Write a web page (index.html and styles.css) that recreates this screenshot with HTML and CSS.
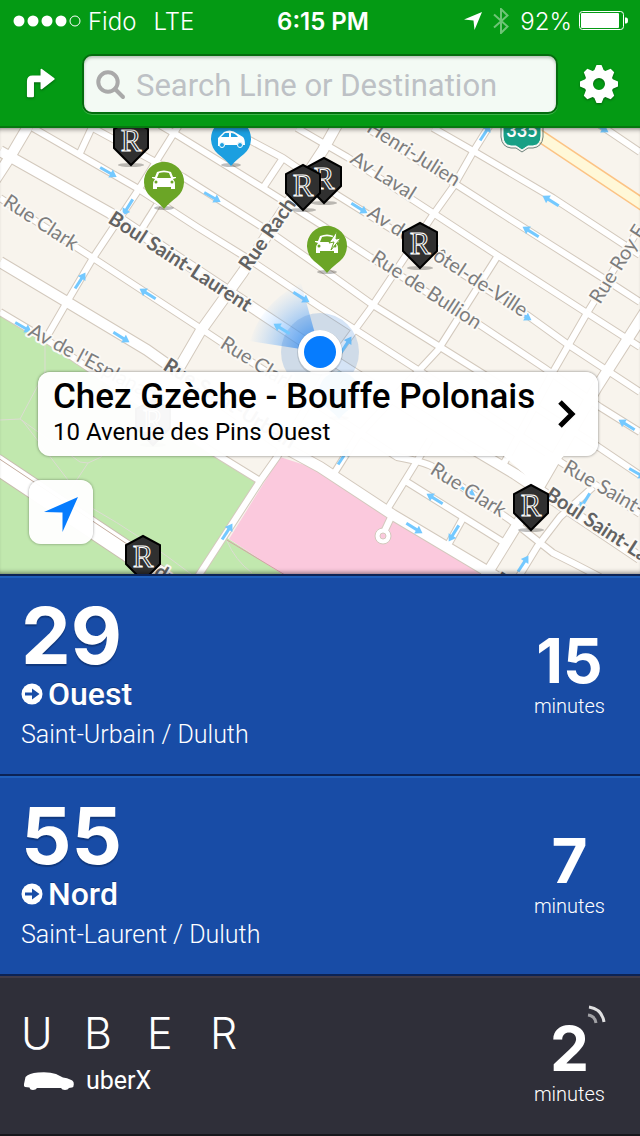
FILE: index.html
```
<!DOCTYPE html>
<html lang="en">
<head>
  <meta charset="UTF-8">
  <meta name="viewport" content="width=device-width, initial-scale=1.0">
  <title>Nearby lines</title>
  <link rel="stylesheet" href="styles.css">
</head>
<body>
  <header class="header">
    <!-- Phone status bar -->
    <div class="status">
      <div class="status-left">
        <svg class="signal" viewBox="0 0 68 12" aria-hidden="true">
          <circle cx="6" cy="6" r="5.5"/><circle cx="20" cy="6" r="5.5"/><circle cx="34" cy="6" r="5.5"/><circle cx="48" cy="6" r="5.5"/>
          <circle cx="62" cy="6" r="5" fill="none" stroke="#fff"/>
        </svg>
        <span>Fido</span>
        <span class="network">LTE</span>
      </div>
      <div class="clock">6:15 PM</div>
      <div class="status-right">
        <svg class="gps" viewBox="0 0 18 18" aria-hidden="true"><path d="M18 0L10.500 18L9.500 8.500L0 7.500Z"/></svg>
        <svg class="bluetooth" viewBox="0 0 16 26" aria-hidden="true"><path d="M1 6.500L14.500 18.500L8 25V1L14.500 7.500L1 19.500"/></svg>
        <span>92%</span>
        <svg class="battery" viewBox="0 0 50 20" aria-hidden="true">
          <rect x=".5" y=".5" width="44" height="18" rx="3" fill="none" stroke="#fff"/>
          <rect x="2" y="2" width="38" height="15" rx="1"/>
          <path d="M46 6.500h1q2 0 2 3t-2 3h-1z"/>
        </svg>
      </div>
    </div>
    <!-- Search bar with its two buttons -->
    <div class="nav">
      <button class="nav-button" type="button" aria-label="Directions">
        <svg width="30" height="32" viewBox="0 0 32 34"><path d="M1 30V14Q1 8 7 8H15.500V1.500Q16 .5 17 1L30 10.500Q31.500 11.500 30 12.500L17 22.500Q16 23 15.500 22V15H8.500V30Q8.500 31 7 31H2.500Q1 31 1 30Z"/></svg>
      </button>
      <div class="search">
        <svg class="search-icon" viewBox="0 0 30 30" aria-hidden="true"><circle cx="12" cy="12" r="9.700"/><path d="M19 19L27 27"/></svg>
        <input class="search-input" type="search" placeholder="Search Line or Destination" aria-label="Search Line or Destination">
      </div>
      <button class="nav-button" type="button" aria-label="Settings">
        <svg width="38" height="38" viewBox="-19 -19 38 38">
          <defs><path id="tooth" d="M-5.500 -12L-2.500 -19H2.500L5.500 -12Z"/></defs>
          <path fill-rule="evenodd" d="M0 -14.500A14.500 14.500 0 1 1 0 14.500A14.500 14.500 0 1 1 0 -14.500ZM0 -6A6 6 0 1 0 0 6A6 6 0 1 0 0 -6Z"/>
          <use href="#tooth"/><use href="#tooth" transform="rotate(45)"/><use href="#tooth" transform="rotate(90)"/><use href="#tooth" transform="rotate(135)"/>
          <use href="#tooth" transform="rotate(180)"/><use href="#tooth" transform="rotate(225)"/><use href="#tooth" transform="rotate(270)"/><use href="#tooth" transform="rotate(315)"/>
        </svg>
      </button>
    </div>
  </header>

  <main>
    <section class="map">
      <svg class="map-canvas" viewBox="0 128 640 446" preserveAspectRatio="xMidYMid slice">
        <defs>
          <g id="minor">
            <path d="M33 128L137 188L197 227L247 258L320 307L387 350L553 457L640 514"/>
            <path d="M93 128L183 177L267 230L320 267L373 305L480 372L597 446L640 475"/>
            <path d="M160 125L177 135L263 188L320 224L370 257L480 325L543 367L600 407L640 432"/>
            <path d="M227 128L283 158L337 195L433 255L527 315L570 346L640 392"/>
            <path d="M297 128L347 157L433 213L497 255L587 313L640 347"/>
            <path d="M367 128L457 185L507 217L603 278L640 302"/>
            <path d="M433 128L475 152L553 198L640 255"/>
            <path d="M600 125L640 152"/>
            <path d="M0 198L93 258L200 328L233 350L310 400L397 457Q425 462 433 467L503 515L520 527L553 553L573 563L600 577"/>
            <path d="M0 312L47 340L213 452L260 481"/>
            <path d="M407 482L463 517L503 542"/>
            <path d="M93 125L80 153"/>
            <path d="M179 125L137 192L93 258L67 302L45 340"/>
            <path d="M157 205L140 232"/>
            <path d="M283 158L263 188"/>
            <path d="M493 120L473 152L453 187L433 215L373 305L340 350L277 457L260 481L197 578"/>
            <path d="M497 257L438 350L357 437L335 472"/>
            <path d="M640 227L587 313L553 372L502 467M430 440L388 508M393 513L385 530"/>
            <path d="M463 518L448 545"/>
            <path d="M593 487L560 517L537 547L518 578"/>
          </g>
          <g id="major">
            <path d="M0 151L110 213L190 266L300 339L463 443L515 474L640 558"/>
            <path d="M0 262L67 302L147 350L285 448L320 467L393 515L497 577"/>
            <path d="M30 123L10 157L-5 180"/>
            <path d="M338 123L323 150L243 272L200 332L175 375"/>
            <path d="M645 312L597 387L517 525L485 577"/>
          </g>
          <g id="arrow"><path d="M-9 0H4" fill="none" stroke="#74c9ff" stroke-width="3"/><path d="M3 -4.500L10 0L3 4.500Z" fill="#74c9ff"/></g>
          <!-- Pins have their tip at 0,0 -->
          <g id="venue">
            <ellipse cy="-1" rx="13" ry="2" fill="#000" opacity=".25"/>
            <path d="M0 -46L17 -37V-18L0 -1L-17 -18V-37Z" fill="#303030" stroke="#000" stroke-width="2"/>
            <text class="venue-letter" x="0" y="-15">R</text>
          </g>
          <g id="drop">
            <ellipse cy="-1" rx="10" ry="2" fill="#000" opacity=".25"/>
            <path d="M0 0Q-4 -5 -13 -12A20 20 0 1 1 13 -12Q4 -5 0 0Z"/>
          </g>
          <g id="car">
            <path d="M-12 -32H-9L-7 -37Q0 -40 7 -37L9 -32H12V-31L9 -30Q11 -28 11 -24V-20H7V-22H-7V-20H-11V-24Q-11 -28 -9 -30L-12 -31Z" fill="#fff"/>
            <path d="M-7 -31L-5 -36Q0 -37.500 5 -36L7 -31Z"/>
            <circle cx="-8" cy="-27" r="1.500"/><circle cx="8" cy="-27" r="1.500"/>
          </g>
          <radialGradient id="beam" gradientUnits="userSpaceOnUse" cx="320" cy="352" r="72"><stop offset=".3" stop-color="#3d94f5" stop-opacity=".7"/><stop offset="1" stop-color="#7ab9ff" stop-opacity="0"/></radialGradient>
        </defs>

        <rect x="0" y="128" width="640" height="446" fill="#f8f4ed"/>
        <path d="M0 315L47 343L213 455L259 482L197 576H0Z" fill="#c1e8ae"/>
        <path d="M227 538L195 578H290Z" fill="#c1e8ae"/>
        <path d="M280 457L320 470L490 578H288L229 539Z" fill="#fbc9dd"/>
        <path d="M227 540L290 578" stroke="#d3a1a5"/>
        <path d="M45 345V372L20 419Q30 426 80 462L88 463L70 490M20 419L0 420M88 463Q100 459 110 450M22 420L68 480M0 473L30 492M92 508Q140 535 195 577M227 541Q235 560 252 573" fill="none" stroke="#dcdcd2"/>

        <use href="#minor" class="casing"/>
        <use href="#major" class="casing-major"/>
        <circle cx="383" cy="536" r="8" fill="#fff" stroke="#d3c9bd"/>
        <use href="#minor" class="road"/>
        <use href="#major" class="road-major"/>
        <circle cx="383" cy="536" r="3" fill="#fbc9dd" stroke="#d3c9bd"/>
        <path d="M-5 463L127 551L165 580" fill="none" stroke="#c9bdb0" stroke-width="21"/>
        <path d="M-5 463L127 551L165 580" fill="none" stroke="#fff" stroke-width="19"/>
        <path d="M-5 456L127 544L180 580" fill="none" stroke="#c3ab9d"/>
        <path d="M510 116L645 206" stroke="#fcc384" stroke-width="13"/>
        <path d="M510 116L645 206" stroke="#fff8d8" stroke-width="10"/>

        <g>
          <use href="#arrow" transform="translate(108 172) rotate(30)"/>
          <use href="#arrow" transform="translate(212 197) rotate(30)"/>
          <use href="#arrow" transform="translate(128 207) rotate(122)"/>
          <use href="#arrow" transform="translate(80 281) rotate(-57)"/>
          <use href="#arrow" transform="translate(148 294) rotate(212)"/>
          <use href="#arrow" transform="translate(121 337) rotate(32)"/>
          <use href="#arrow" transform="translate(301 297) rotate(32)"/>
          <use href="#arrow" transform="translate(23 327) rotate(30)"/>
          <use href="#arrow" transform="translate(485 133) rotate(-57)"/>
          <use href="#arrow" transform="translate(359 208) rotate(32)"/>
          <use href="#arrow" transform="translate(551 201) rotate(212)"/>
          <use href="#arrow" transform="translate(531 232) rotate(212)"/>
          <use href="#arrow" transform="translate(523 315) rotate(32)"/>
          <use href="#arrow" transform="translate(600 127) rotate(32)"/>
          <use href="#arrow" transform="translate(346 345) rotate(-57)"/>
          <use href="#arrow" transform="translate(343 457) rotate(-57)"/>
          <use href="#arrow" transform="translate(227 532) rotate(-57)"/>
          <use href="#arrow" transform="translate(627 425) rotate(212)"/>
          <use href="#arrow" transform="translate(637 473) rotate(30)"/>
          <use href="#arrow" transform="translate(435 499) rotate(212)"/>
          <use href="#arrow" transform="translate(414 528) rotate(32)"/>
          <use href="#arrow" transform="translate(454 533) rotate(122)"/>
          <use href="#arrow" transform="translate(523 564) rotate(-57)"/>
          <use href="#arrow" transform="translate(585 501) rotate(122)"/>
          <use href="#arrow" transform="translate(467 491) rotate(32)"/>
        </g>

        <!-- Heading beam and halo under the street names -->
        <path d="M320 352L250 341Q262 302 301 283Z" fill="url(#beam)"/>
        <circle cx="320" cy="352" r="39" fill="#3f86d6" opacity=".22"/>
        <use href="#arrow" transform="translate(282 329) rotate(212)"/>

        <g class="street">
          <text transform="translate(2 205) rotate(33)">Rue Clark</text>
          <text transform="translate(219 347) rotate(32)">Rue Clark</text>
          <text transform="translate(27 335) rotate(28)">Av de l'Esplanade</text>
          <text transform="translate(455 187) rotate(32)" text-anchor="end">Henri-Julien</text>
          <text transform="translate(349 162) rotate(32)">Av Laval</text>
          <text transform="translate(366 216) rotate(33)">Av de l'Hôtel-de-Ville</text>
          <text transform="translate(370 261) rotate(33)">Rue de Bullion</text>
          <text transform="translate(600 305) rotate(-58)">Rue Roy E</text>
          <text transform="translate(429 473) rotate(32)">Rue Clark</text>
          <text transform="translate(562 471) rotate(30)">Rue Saint-Urbain</text>
        </g>
        <g class="street avenue">
          <text transform="translate(107 222) rotate(33)">Boul Saint-Laurent</text>
          <text transform="translate(249 272) rotate(-55)">Rue Rachel</text>
          <text transform="translate(162 369) rotate(32)">Rue Saint-Urbain</text>
          <text transform="translate(544 498) rotate(33)">Boul Saint-Laurent</text>
          <text transform="translate(153 575) rotate(32)">du Parc</text>
          <text transform="translate(493 583) rotate(32)">Rue</text>
        </g>

        <path d="M503 120H541V136Q541 145 533 146H528L522 150L516 146H511Q503 145 503 136Z" fill="#18a085" stroke="#fff"/>
        <path d="M501 126V137Q502 147 511 148H516L522 152L528 148H533Q542 147 543 137V126" fill="none" stroke="#6d817b"/>
        <text class="shield" x="522" y="137">335</text>

        <use href="#venue" transform="translate(131 166)"/>
        <use href="#venue" transform="translate(324 204)"/>
        <use href="#venue" transform="translate(303 211)"/>
        <use href="#venue" transform="translate(420 269)"/>
        <use href="#venue" transform="translate(153 446)"/>
        <use href="#venue" transform="translate(143 582)"/>
        <g class="pin-green" transform="translate(164 209)"><use href="#drop"/><use href="#car"/></g>
        <g class="pin-green" transform="translate(327 273)">
          <use href="#drop"/><use href="#car"/>
          <path d="M10 -42L2 -30L7 -31L4 -23L14 -35L9 -34Z" fill="#fff" stroke="#6ba526" stroke-width="1"/>
        </g>
        <g class="pin-blue" transform="translate(339 419)"><use href="#drop"/></g>
        <g class="pin-blue" transform="translate(231 166)">
          <use href="#drop"/>
          <path d="M-13 -20V-28L-7 -34Q0 -38 7 -32L12 -29Q14 -27 14 -21H12Q9 -27 6 -21H-6Q-9 -27 -12 -20Z" fill="#fff"/>
          <path d="M-10 -29L-6 -33H-2V-29ZM0 -33Q4 -33 7 -29H0Z"/>
          <circle cx="-9" cy="-21" r="2.500" stroke="#fff"/><circle cx="9" cy="-21" r="2.500" stroke="#fff"/>
        </g>

        <circle cx="320" cy="353" r="23" fill="#000" opacity=".12"/>
        <circle cx="320" cy="352" r="22" fill="#fff"/>
        <circle cx="320" cy="352" r="16" fill="#067cfe"/>
        <use href="#venue" transform="translate(531 531)"/>
      </svg>

      <a class="callout" href="#">
        <span class="callout-text">
          <span class="callout-title">Chez Gzèche - Bouffe Polonais</span>
          <span class="callout-address">10 Avenue des Pins Ouest</span>
        </span>
        <svg class="chevron" viewBox="0 0 18 28" aria-hidden="true"><path d="M2 2L14 14L2 26"/></svg>
        <svg class="callout-tail" viewBox="0 0 60 28" aria-hidden="true"><path d="M0 0H60L31 28Z"/></svg>
      </a>

      <button class="locate" type="button" aria-label="My location">
        <svg width="34" height="35" viewBox="0 0 34 35"><path d="M34 0L18.500 35V15.500L0 15Z"/></svg>
      </button>
    </section>

    <!-- Nearby departures -->
    <section class="lines">
      <article class="line">
        <div class="line-info">
          <h2 class="line-number">29</h2>
          <p class="direction">
            <svg class="direction-icon" viewBox="0 0 22 22" aria-hidden="true"><circle cx="11" cy="11" r="10.500"/><path d="M4 9.500H11V5.500L18.500 11L11 16.500V12.500H4Z"/></svg>
            Ouest
          </p>
          <p class="stop">Saint-Urbain / Duluth</p>
        </div>
        <div class="eta">
          <span class="eta-value">15</span>
          <span class="eta-unit">minutes</span>
        </div>
      </article>

      <article class="line">
        <div class="line-info">
          <h2 class="line-number">55</h2>
          <p class="direction">
            <svg class="direction-icon" viewBox="0 0 22 22" aria-hidden="true"><circle cx="11" cy="11" r="10.500"/><path d="M4 9.500H11V5.500L18.500 11L11 16.500V12.500H4Z"/></svg>
            Nord
          </p>
          <p class="stop">Saint-Laurent / Duluth</p>
        </div>
        <div class="eta">
          <span class="eta-value">7</span>
          <span class="eta-unit">minutes</span>
        </div>
      </article>

      <article class="line uber">
        <div class="line-info">
          <h2 class="uber-name"><span>U</span><span>B</span><span>E</span><span>R</span></h2>
          <p class="uber-product">
            <svg class="uber-car" viewBox="0 0 50 18" aria-hidden="true"><path d="M0 12L1.500 5Q5 1 14 .5Q25 -.5 32 2L39 5.500Q48 7 49.500 10Q50.500 15 48 15.500L45 16Q44 18 41 18T37 16H13Q12 18 9 18T5.500 15.500L1 15Q-.5 14 0 12Z"/></svg>
            uberX
          </p>
        </div>
        <div class="eta">
          <span class="eta-value">2</span>
          <span class="eta-unit">minutes</span>
          <svg class="live" viewBox="0 0 20 20" aria-hidden="true"><path d="M1 10Q8 11 9 18" opacity=".55"/><path d="M2 2Q15 4 17 17" opacity=".85"/></svg>
        </div>
      </article>
    </section>
  </main>
</body>
</html>
```

FILE: styles.css
```
* {
  box-sizing: border-box;
}
body {
  margin: 0;
  min-height: 100vh;
  display: flex;
  flex-direction: column;
  background-color: #2f2f39;
  color: #fff;
  font-family: Roboto, "Liberation Sans", sans-serif;
}
h2,
p {
  margin: 0;
}
button {
  padding: 0;
  border: 0;
  background: none;
  cursor: pointer;
}
/* Green header */
.header {
  background-color: #049a14;
  border-bottom: 2px solid #067810;
  fill: #fff;
}
.status {
  display: grid;
  grid-template-columns: 1fr auto 1fr;
  align-items: center;
  height: 42px;
  padding: 0 11px 0 13px;
  font-family: Inter, "Liberation Sans", sans-serif;
  font-size: 24px;
  font-weight: 300;
}
.status-left,
.status-right {
  display: flex;
  align-items: center;
  gap: 7px;
}
.status-right {
  justify-content: flex-end;
}
.signal {
  width: 68px;
  height: 12px;
}
.network {
  margin-left: 10px;
}
.clock {
  padding-left: 4px;
  font-weight: 600;
}
.gps {
  width: 18px;
  height: 18px;
  margin-right: 4px;
}
.bluetooth {
  width: 16px;
  height: 26px;
  margin-right: 4px;
  fill: none;
  stroke: #6fc477;
  stroke-width: 2;
}
.battery {
  width: 50px;
  height: 20px;
}
.nav {
  display: flex;
  align-items: center;
  height: 84px;
}
.nav-button {
  display: flex;
  align-items: center;
  justify-content: center;
  width: 82px;
  height: 60px;
}
.nav-button svg {
  fill: #fff;
  filter: drop-shadow(0 1px 1px #04600d);
}
.search {
  display: flex;
  align-items: center;
  gap: 10px;
  flex: 1;
  min-width: 0;
  height: 60px;
  padding: 2px 12px 0;
  background-color: #f3faf4;
  border: 2px solid #046c0e;
  border-radius: 10px;
  box-shadow: inset 0 2px 3px #b9c4ba, 0 1px 0 #3cb349;
}
.search-icon {
  flex: none;
  width: 30px;
  height: 30px;
  fill: none;
  stroke: #a9a9a9;
  stroke-width: 4;
  stroke-linecap: round;
}
.search-input {
  flex: 1;
  min-width: 0;
  padding: 0;
  border: 0;
  outline: 0;
  background: none;
  font: 400 31px Roboto, "Liberation Sans", sans-serif;
}
.search-input::placeholder {
  color: #bdc1c5;
}
/* Map */
main {
  display: flex;
  flex-direction: column;
  flex: 1;
}
.map {
  position: relative;
  flex: 1;
  min-height: 446px;
  overflow: hidden;
}
.map::after {
  content: "";
  position: absolute;
  inset: 0;
  box-shadow: inset 0 5px 5px -4px rgba(0, 0, 0, 0.5), inset 0 -5px 5px -4px rgba(0, 0, 0, 0.5);
  pointer-events: none;
}
.map-canvas {
  position: absolute;
  width: 100%;
  height: 100%;
}
.casing,
.casing-major,
.road,
.road-major {
  fill: none;
  stroke-linejoin: round;
}
.casing {
  stroke: #d3c9bd;
  stroke-width: 8;
}
.casing-major {
  stroke: #d3c9bd;
  stroke-width: 12;
}
.road {
  stroke: #fff;
  stroke-width: 6;
}
.road-major {
  stroke: #fff;
  stroke-width: 10;
}
.street {
  font-family: Lato, "Liberation Sans", sans-serif;
  font-size: 20px;
  fill: #7d7d7d;
  stroke: #fbf9f5;
  stroke-width: 4;
  stroke-linejoin: round;
  paint-order: stroke;
}
.avenue {
  font-weight: 700;
  fill: #626262;
}
.shield {
  font-family: Lato, "Liberation Sans", sans-serif;
  font-size: 18px;
  font-weight: 700;
  fill: #fff;
  text-anchor: middle;
}
.venue-letter {
  font-family: "Liberation Serif", serif;
  font-size: 31px;
  fill: #303030;
  stroke: #fff;
  stroke-width: 1;
  text-anchor: middle;
}
.pin-green {
  fill: #6ba526;
}
.pin-blue {
  fill: #1c9fe0;
}
/* Popup over the selected place */
.callout {
  position: absolute;
  top: 244px;
  left: 38px;
  right: 42px;
  display: flex;
  align-items: center;
  justify-content: space-between;
  height: 84px;
  padding: 0 22px 0 15px;
  background-color: rgba(255, 255, 255, 0.96);
  border-radius: 12px;
  box-shadow: 0 0 3px rgba(0, 0, 0, 0.5);
  color: #000;
  text-decoration: none;
}
.callout-text {
  display: flex;
  flex-direction: column;
  padding-bottom: 4px;
}
.callout-title {
  font-size: 35px;
  font-weight: 500;
  line-height: 40px;
}
.callout-address {
  font-size: 24px;
  line-height: 30px;
}
.chevron {
  width: 18px;
  height: 28px;
  fill: none;
  stroke: #000;
  stroke-width: 5;
}
.callout-tail {
  position: absolute;
  top: 100%;
  right: 34px;
  width: 60px;
  height: 28px;
  fill: #fff;
}
.locate {
  position: absolute;
  left: 29px;
  bottom: 30px;
  display: flex;
  align-items: center;
  justify-content: center;
  width: 64px;
  height: 64px;
  padding-top: 4px;
  background-color: rgba(255, 255, 255, 0.96);
  border-radius: 12px;
  box-shadow: 0 0 3px rgba(0, 0, 0, 0.4);
  fill: #067cfe;
}
/* Departure rows */
.line {
  display: flex;
  justify-content: space-between;
  height: 200px;
  padding: 21px 35px 0 21px;
  background-color: #184ca6;
  border-top: 2px solid #0c2355;
  box-shadow: inset 0 2px 0 #1f5fba;
}
.line-number {
  font-family: Inter, "Liberation Sans", sans-serif;
  font-size: 79px;
  font-weight: 700;
  line-height: 76px;
  text-shadow: 0 2px 1px #10387e;
}
.direction {
  display: flex;
  align-items: center;
  gap: 5px;
  font-size: 32px;
  font-weight: 500;
  line-height: 42px;
  text-shadow: 0 -1px 0 #10387e;
}
.direction-icon {
  width: 22px;
  height: 22px;
  fill: #fff;
}
.direction-icon path {
  fill: #184ca6;
}
.stop {
  font-size: 25px;
  font-weight: 300;
  line-height: 40px;
}
.eta {
  position: relative;
  display: flex;
  flex-direction: column;
  align-items: center;
  padding-top: 34px;
}
.eta-value {
  font-family: Inter, "Liberation Sans", sans-serif;
  font-size: 62px;
  font-weight: 700;
  line-height: 60px;
}
.eta-unit {
  font-size: 20px;
  font-weight: 300;
  line-height: 30px;
}
/* Uber row */
.uber {
  height: 162px;
  background-color: #2f2f39;
  border-bottom: 2px solid #17171c;
  box-shadow: inset 0 2px 0 #413b48;
}
.uber-name {
  display: grid;
  grid-template-columns: repeat(4, 63px);
  padding-top: 14px;
  font-family: Inter, "Liberation Sans", sans-serif;
  font-size: 43px;
  font-weight: 300;
  line-height: 44px;
}
.uber-product {
  display: flex;
  align-items: center;
  gap: 12px;
  padding-left: 3px;
  font-size: 25px;
  line-height: 52px;
}
.uber-car {
  width: 50px;
  height: 18px;
  fill: #fff;
}
.uber .eta {
  padding-top: 22px;
}
.live {
  position: absolute;
  top: 8px;
  right: -2px;
  width: 20px;
  height: 20px;
  fill: none;
  stroke: #fff;
  stroke-width: 3;
}
```
